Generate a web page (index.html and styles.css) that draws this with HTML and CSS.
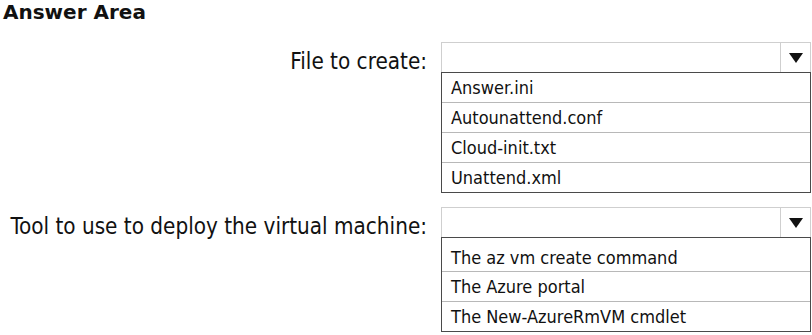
FILE: index.html
```html
<!DOCTYPE html>
<html>
<head>
    <title>Answer Area</title>
    <link rel="stylesheet" href="styles.css">
</head>
<body>
    <h1 class="title">Answer Area</h1>

    <div class="question">
        <div class="label">File to create:</div>
        <div class="dropdown">
            <div class="select">
                <div class="arrow">
                    <svg width="14" height="10" viewBox="0 0 14 10"><polygon points="0,0 14,0 7,10" fill="#111"/></svg>
                </div>
            </div>
            <ul class="options">
                <li>Answer.ini</li>
                <li>Autounattend.conf</li>
                <li>Cloud-init.txt</li>
                <li>Unattend.xml</li>
            </ul>
        </div>
    </div>

    <div class="question second">
        <div class="label">Tool to use to deploy the virtual machine:</div>
        <div class="dropdown">
            <div class="select">
                <div class="arrow">
                    <svg width="14" height="10" viewBox="0 0 14 10"><polygon points="0,0 14,0 7,10" fill="#111"/></svg>
                </div>
            </div>
            <ul class="options tall-first">
                <li>The az vm create command</li>
                <li>The Azure portal</li>
                <li>The New-AzureRmVM cmdlet</li>
            </ul>
        </div>
    </div>
</body>
</html>
```

FILE: styles.css
```css
body {
    margin: 0;
    background-color: #fff;
    color: #111;
    font-family: "DejaVu Sans Condensed", "DejaVu Sans", sans-serif;
}
.title {
    margin: 0;
    padding-left: 3px;
    font-family: "DejaVu Sans", sans-serif;
    font-size: 20px;
    font-weight: bold;
    line-height: 24px;
}
.question {
    display: grid;
    grid-template-columns: 427px 370px;
    column-gap: 14px;
    margin-top: 18px;
}
.question.second {
    margin-top: 14px;
}
.label {
    text-align: right;
    font-size: 22.3px;
    line-height: 30px;
    padding-top: 4px;
    white-space: nowrap;
}
.select {
    height: 30px;
    box-sizing: border-box;
    border: 1px solid #cfcfcf;
    border-bottom: none;
    display: flex;
    justify-content: flex-end;
}
.arrow {
    width: 29px;
    border-left: 1px solid #cfcfcf;
    display: flex;
    align-items: center;
    justify-content: center;
}
.options {
    list-style: none;
    margin: 0;
    padding: 0;
    border: 1px solid #4a4a4a;
}
.options li {
    height: 29px;
    line-height: 29px;
    padding-left: 9px;
    font-size: 18px;
    border-top: 1px solid #b8b8b8;
}
.options li:first-child {
    border-top: none;
}
.tall-first li:first-child {
    height: 33px;
    line-height: 39px;
}
```
